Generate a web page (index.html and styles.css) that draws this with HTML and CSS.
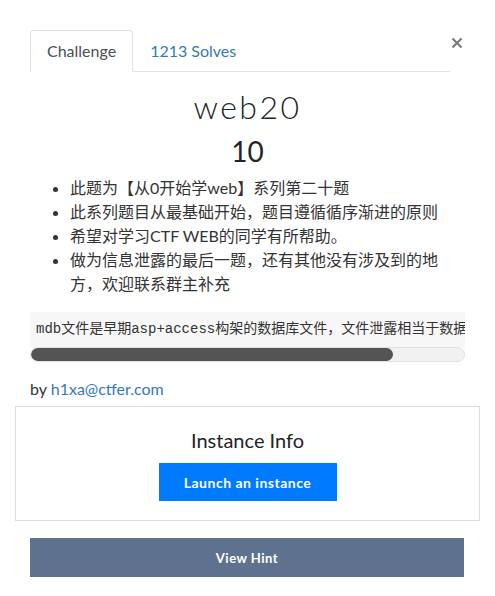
FILE: index.html
```html
<!DOCTYPE html>
<html lang="zh">
<head>
<meta charset="utf-8">
<title>web20</title>
<link rel="stylesheet" href="styles.css">
</head>
<body>
<div class="modal">
  <div class="modal-body">
    <div class="tab-row">
      <ul class="nav-tabs">
        <li><a class="nav-link active">Challenge</a></li>
        <li><a class="nav-link">1213 Solves</a></li>
      </ul>
      <button class="close" type="button" aria-label="Close">
        <svg width="12" height="12" viewBox="0 0 12 12"><path d="M1.5 1.5 L10.5 10.5 M10.5 1.5 L1.5 10.5" stroke="#7a7a7a" stroke-width="2.2" stroke-linecap="butt"/></svg>
      </button>
    </div>
    <h2 class="challenge-name">web20</h2>
    <h3 class="challenge-value">10</h3>
    <ul class="desc">
      <li>此题为【从0开始学web】系列第二十题</li>
      <li>此系列题目从最基础开始，题目遵循循序渐进的原则</li>
      <li>希望对学习CTF WEB的同学有所帮助。</li>
      <li>做为信息泄露的最后一题，还有其他没有涉及到的地方，欢迎联系群主补充</li>
    </ul>
    <div class="code-wrap">
      <pre class="code">mdb文件是早期asp+access构架的数据库文件，文件泄露相当于数据库被脱裤了。</pre>
      <div class="scroll-track"><div class="scroll-thumb" style="width: 362px"></div></div>
    </div>
    <p class="author">by <a class="link">h1xa@ctfer.com</a></p>
    <div class="instance">
      <h5 class="instance-title">Instance Info</h5>
      <button class="btn-launch" type="button">Launch an instance</button>
    </div>
    <button class="btn-hint" type="button">View Hint</button>
  </div>
</div>
</body>
</html>
```

FILE: styles.css
```css
* { box-sizing: border-box; }
html, body { margin: 0; padding: 0; background: #fff; }
body {
  font-family: "Lato", "Noto Sans CJK SC", sans-serif;
  font-size: 16px;
  line-height: 1.5;
  color: #333;
}
.modal { margin-left: 15px; width: 465px; }
.modal-body { padding: 30px 0 0 0; }
.tab-row {
  display: flex;
  align-items: flex-start;
  padding: 0 15px;
}
.nav-tabs {
  display: flex;
  list-style: none;
  margin: 0;
  padding: 0;
  width: 420px;
  border-bottom: 1px solid #dee2e6;
}
.nav-link {
  display: block;
  padding: 8px 16px;
  margin-bottom: -1px;
  border: 1px solid transparent;
  border-top-left-radius: 4px;
  border-top-right-radius: 4px;
  color: #337ab7;
  line-height: 24px;
}
.nav-link.active {
  color: #495057;
  border-color: #dee2e6 #dee2e6 #fff;
  background: #fff;
}
.close {
  margin-left: auto;
  margin-right: 1px;
  margin-top: 7px;
  background: none;
  border: 0;
  padding: 0;
  width: 14px;
  height: 12px;
  display: flex;
  justify-content: center;
}
.challenge-name {
  margin: 0 0 8px;
  padding-top: 16px;
  text-align: center;
  font-family: "Lato", sans-serif;
  font-weight: 300;
  font-size: 32px;
  line-height: 38px;
  letter-spacing: 2.5px;
  color: #212529;
}
.challenge-value {
  margin: 0 0 8px;
  text-align: center;
  font-weight: 400;
  font-size: 28px;
  line-height: 34px;
  color: #212529;
}
.desc {
  margin: 0 0 16px;
  padding: 0 15px 0 55px;
  line-height: 24px;
  color: #333;
}
.code-wrap { margin: 0 15px 15px; }
.code {
  margin: 0;
  padding: 7px 6px 8px;
  background: #f7f7f7;
  font-family: "Liberation Mono", "Noto Sans CJK SC", monospace;
  font-size: 14px;
  line-height: 20px;
  color: #333;
  overflow: hidden;
  white-space: pre;
}
.scroll-track {
  height: 15px;
  background: #f1f1f1;
  border: 1px solid #e0e0e0;
  border-radius: 8px;
  overflow: hidden;
}
.scroll-thumb {
  height: 100%;
  background: #545454;
  border-radius: 8px;
}
.author {
  margin: 0 15px 5px;
  line-height: 24px;
  color: #333;
}
.link { color: #337ab7; text-decoration: none; }
.instance {
  border: 1px solid #ddd;
  padding: 21px 15px 19px;
  display: flex;
  flex-direction: column;
  align-items: center;
}
.instance-title {
  margin: 0 0 11px;
  font-size: 20px;
  font-weight: 400;
  line-height: 24px;
  color: #212529;
}
.btn-launch {
  width: 178px;
  height: 38px;
  border: 0;
  background: #007bff;
  color: #fff;
  font-family: "Lato", sans-serif;
  font-weight: 700;
  font-size: 14px;
  letter-spacing: 0.5px;
}
.btn-hint {
  display: block;
  margin: 17px 15px 0;
  width: 434px;
  height: 39px;
  border: 0;
  background: #5e728f;
  color: #fff;
  font-family: "Lato", sans-serif;
  font-weight: 700;
  font-size: 13px;
  letter-spacing: 0.5px;
}
```
